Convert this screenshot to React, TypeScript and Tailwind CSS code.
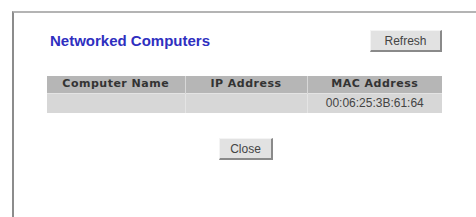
export default function App() {
  const btn =
    "h-[22px] bg-[#e2e2e2] border border-t-[#f4f4f4] border-l-[#f4f4f4] border-r-[#8a8a8a] border-b-[#8a8a8a] border-r-2 border-b-2 text-[12px] text-[#444] leading-none [font-family:'Liberation_Sans',Arial,sans-serif]";

  return (
    <div className="w-[476px] h-[217px] bg-white pl-[12px] pt-[11px] overflow-hidden">
      <div className="w-[480px] h-[220px] border-l-2 border-t-2 border-l-[#8c8c8c] border-t-[#b4b4b4] pl-[33px] pt-[17px]">
        <div className="w-[395px] flex flex-col">
          <div className="flex items-center justify-between h-[22px]">
            <span className="ml-[3px] text-[15px] font-bold text-[#2f2fc0] [font-family:'Liberation_Sans',Arial,sans-serif]">
              Networked Computers
            </span>
            <button className={btn + " w-[72px]"}>Refresh</button>
          </div>

          <table className="mt-[24px] w-[395px] border-collapse table-fixed">
            <colgroup>
              <col className="w-[138px]" />
              <col className="w-[122px]" />
              <col className="w-[135px]" />
            </colgroup>
            <thead>
              <tr className="h-[17px] bg-[#b6b6b6] text-[11px] font-bold text-[#333] tracking-[0.5px] [font-family:'DejaVu_Sans',Verdana,sans-serif]">
                <th className="p-0 text-center border-r border-[#d8d8d8]">Computer Name</th>
                <th className="p-0 text-center border-r border-[#d8d8d8]">IP Address</th>
                <th className="p-0 text-center">MAC Address</th>
              </tr>
            </thead>
            <tbody>
              <tr className="h-[20px] bg-[#d7d7d7] text-[12px] text-[#444] [font-family:'Liberation_Sans',Arial,sans-serif]">
                <td className="p-0 border-r border-t border-[#e4e4e4]"></td>
                <td className="p-0 border-r border-t border-[#e4e4e4]"></td>
                <td className="p-0 text-center border-t border-[#e4e4e4]">00:06:25:3B:61:64</td>
              </tr>
            </tbody>
          </table>

          <div className="mt-[25px] flex justify-center">
            <button className={btn + " w-[54px] ml-[3px]"}>Close</button>
          </div>
        </div>
      </div>
    </div>
  );
}
